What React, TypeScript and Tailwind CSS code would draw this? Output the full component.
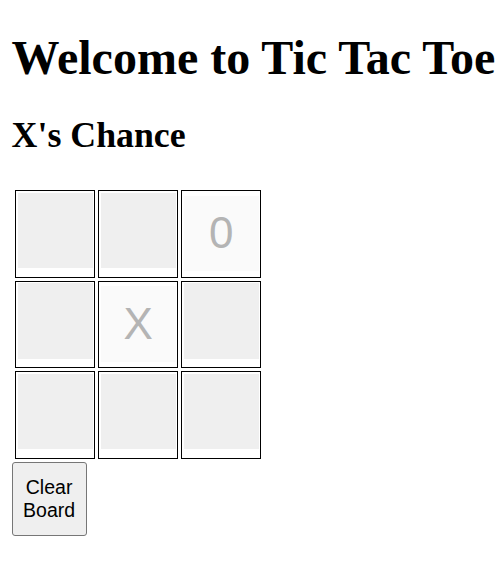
import { useState } from "react";

type Mark = "X" | "0" | null;

const initialBoard: Mark[] = [null, null, "0", null, "X", null, null, null, null];

function Cell({ value, onClick }: { value: Mark; onClick: () => void }) {
  const filled = value !== null;

  return (
    <div className="w-[79.7px] h-[87.7px] border border-black pl-[1.7px]">
      <button
        onClick={onClick}
        disabled={filled}
        className={`w-[75px] h-[75.5px] flex items-center justify-center font-['Liberation_Sans',Arial,sans-serif] text-[44px] leading-[1.149] text-[#b4b4b4] ${
          filled ? "mt-[4.7px] bg-[#fafafa]" : "mt-[1.5px] bg-[#efefef]"
        }`}
      >
        {value}
      </button>
    </div>
  );
}

export default function App() {
  const [board, setBoard] = useState<Mark[]>(initialBoard);
  const [turn, setTurn] = useState<"X" | "0">("X");

  const handleClick = (i: number) => {
    if (board[i]) return;
    const next = [...board];
    next[i] = turn;
    setBoard(next);
    setTurn(turn === "X" ? "0" : "X");
  };

  const clearBoard = () => {
    setBoard(Array(9).fill(null));
    setTurn("X");
  };

  return (
    <div className="min-h-screen bg-white px-[11.6px] font-['Liberation_Serif','Times_New_Roman',serif] text-black">
      <h1 className="pt-[31px] text-[48px] font-bold leading-[53px] whitespace-nowrap">
        Welcome to Tic Tac Toe
      </h1>
      <h2 className="mt-[31px] text-[35.8px] font-bold leading-[40px]">{turn}'s Chance</h2>

      {/* Board */}
      <div className="mt-[35px] ml-[3.4px] grid grid-cols-[repeat(3,79.7px)] gap-x-[3.3px] gap-y-[2.9px] w-fit">
        {board.map((value, i) => (
          <Cell key={i} value={value} onClick={() => handleClick(i)} />
        ))}
      </div>

      <button
        onClick={clearBoard}
        className="mt-[3px] w-[75px] h-[74px] flex items-center justify-center rounded-[3px] border border-[#767676] bg-[#efefef] px-[8px] text-center font-['Liberation_Sans',Arial,sans-serif] text-[19.5px] leading-[1.149] text-black"
      >
        Clear Board
      </button>
    </div>
  );
}
